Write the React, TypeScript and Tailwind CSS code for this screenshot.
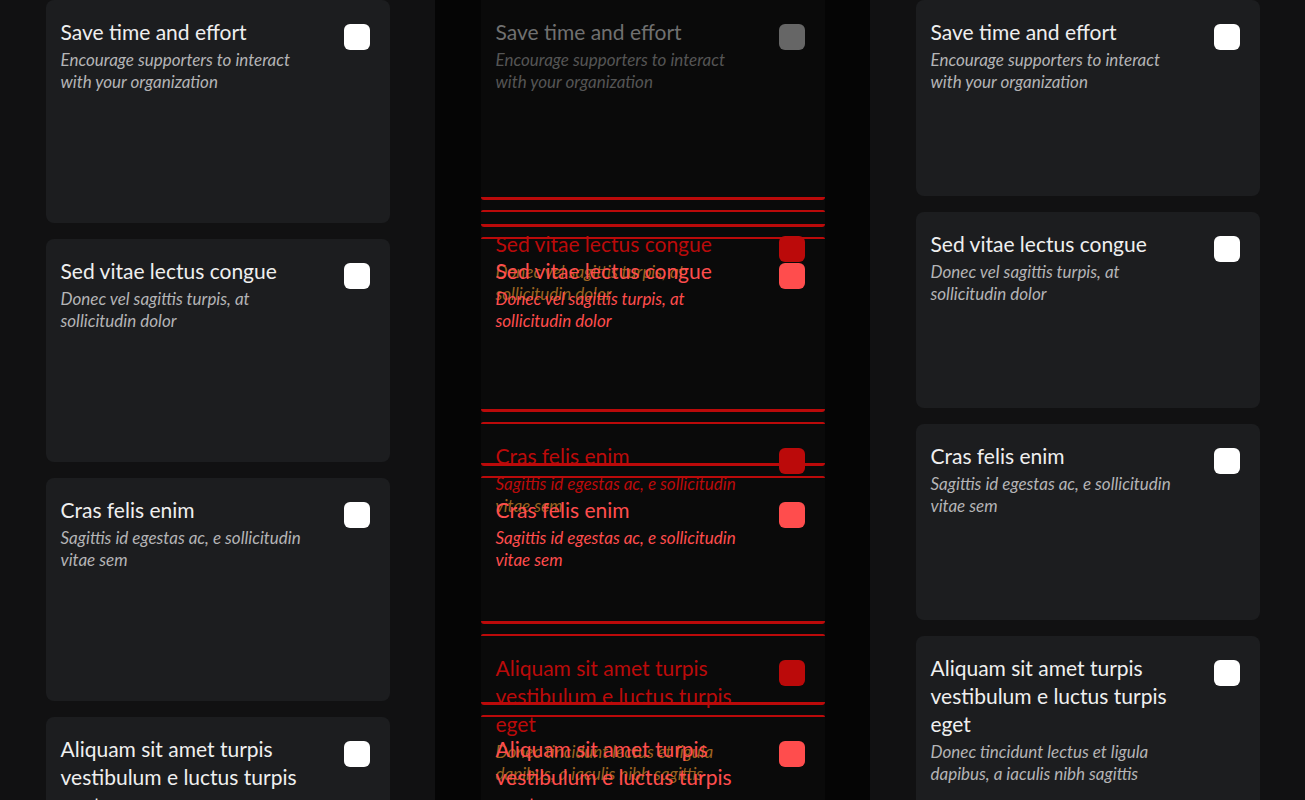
import React from "react";

type Line = { t: string; c?: string };

const FONT = { fontFamily: "Lato, 'Noto Sans', sans-serif" };

const cards = [
  {
    title: ["Save time and effort"],
    sub: ["Encourage supporters to interact", "with your organization"],
  },
  {
    title: ["Sed vitae lectus congue"],
    sub: ["Donec vel sagittis turpis, at", "sollicitudin dolor"],
  },
  {
    title: ["Cras felis enim"],
    sub: ["Sagittis id egestas ac, e sollicitudin", "vitae sem"],
  },
  {
    title: ["Aliquam sit amet turpis", "vestibulum e luctus turpis", "eget"],
    sub: ["Donec tincidunt lectus et ligula", "dapibus, a iaculis nibh sagittis"],
  },
];

function CardBody({
  title,
  sub,
  titleColor,
  subColor,
  boxColor,
}: {
  title: Line[];
  sub: Line[];
  titleColor: string;
  subColor: string;
  boxColor: string;
}) {
  return (
    <div className="flex pl-[15px] pr-[20px] pt-[18px]">
      <div className="w-[263px]">
        <div className="text-[21px] leading-[28px]">
          {title.map((l, i) => (
            <div key={i} className="whitespace-nowrap" style={{ color: l.c ?? titleColor }}>
              {l.t}
            </div>
          ))}
        </div>
        <div className="mt-[3px] text-[17px] italic leading-[22px]">
          {sub.map((l, i) => (
            <div key={i} className="whitespace-nowrap" style={{ color: l.c ?? subColor }}>
              {l.t}
            </div>
          ))}
        </div>
      </div>
      <div
        className="ml-auto mt-[6px] h-[26px] w-[26px] shrink-0 rounded-[6px]"
        style={{ background: boxColor }}
      />
    </div>
  );
}

function Column({ tall }: { tall: boolean }) {
  return (
    <div className="flex h-[800px] w-[435px] shrink-0 flex-col items-center gap-4 overflow-hidden bg-[#111112]">
      {cards.map((c, i) => (
        <div
          key={i}
          className={`w-[344px] shrink-0 rounded-lg bg-[#1c1d1f] ${tall ? "h-[223px]" : "h-[196px]"}`}
        >
          <CardBody
            title={c.title.map((t) => ({ t }))}
            sub={c.sub.map((t) => ({ t }))}
            titleColor="#efefef"
            subColor="#b4b4b6"
            boxColor="#ffffff"
          />
        </div>
      ))}
    </div>
  );
}

const DARK = "#bb0a0a";
const LIGHT = "#ff4d4d";
const BROWN = "#9c6420";

function DiffCard({
  tall,
  first,
  title,
  sub,
  color,
  boxColor,
}: {
  tall: boolean;
  first?: boolean;
  title: Line[];
  sub: Line[];
  color: string;
  boxColor: string;
}) {
  return (
    <div className={`relative w-[344px] shrink-0 ${tall ? "h-[223px]" : "h-[196px]"}`}>
      {!first && (
        <div className="absolute -top-[2px] left-0 right-0 h-[2px] rounded-t-[3px] bg-[#bb0a0a]" />
      )}
      <div className="absolute left-0 right-0 top-[calc(100%+1px)] h-[3px] rounded-b-[3px] bg-[#bb0a0a]" />
      {!first && (
        <div className="relative">
          <CardBody title={title} sub={sub} titleColor={color} subColor={color} boxColor={boxColor} />
        </div>
      )}
    </div>
  );
}

function Middle() {
  const layerA = [
    { title: [], sub: [] },
    {
      title: [{ t: "Sed vitae lectus congue" }],
      sub: [
        { t: "Donec vel sagittis turpis, at", c: BROWN },
        { t: "sollicitudin dolor", c: BROWN },
      ],
    },
    {
      title: [{ t: "Cras felis enim" }],
      sub: [{ t: "Sagittis id egestas ac, e sollicitudin" }, { t: "vitae sem", c: BROWN }],
    },
    {
      title: [
        { t: "Aliquam sit amet turpis" },
        { t: "vestibulum e luctus turpis" },
        { t: "eget" },
      ],
      sub: [
        { t: "Donec tincidunt lectus et ligula", c: BROWN },
        { t: "dapibus, a iaculis nibh sagittis", c: BROWN },
      ],
    },
  ];
  return (
    <div className="flex h-[800px] w-[435px] shrink-0 justify-center bg-[#050505]">
      <div className="relative h-full w-[344px] overflow-hidden bg-[#0a0a0a]">
        <CardBody
          title={[{ t: "Save time and effort" }]}
          sub={[{ t: "Encourage supporters to interact" }, { t: "with your organization" }]}
          titleColor="#707070"
          subColor="#555555"
          boxColor="#666666"
        />
        <div className="absolute inset-x-0 top-0 flex flex-col gap-4">
          {layerA.map((c, i) => (
            <DiffCard
              key={i}
              tall={false}
              first={i === 0}
              title={c.title}
              sub={c.sub}
              color={DARK}
              boxColor={DARK}
            />
          ))}
        </div>
        <div className="absolute inset-x-0 top-0 flex flex-col gap-4">
          {cards.map((c, i) => (
            <DiffCard
              key={i}
              tall
              first={i === 0}
              title={c.title.map((t) => ({ t }))}
              sub={c.sub.map((t) => ({ t }))}
              color={LIGHT}
              boxColor={LIGHT}
            />
          ))}
        </div>
      </div>
    </div>
  );
}

export default function App() {
  return (
    <div className="flex h-[800px] w-[1305px] overflow-hidden" style={FONT}>
      <Column tall />
      <Middle />
      <Column tall={false} />
    </div>
  );
}
